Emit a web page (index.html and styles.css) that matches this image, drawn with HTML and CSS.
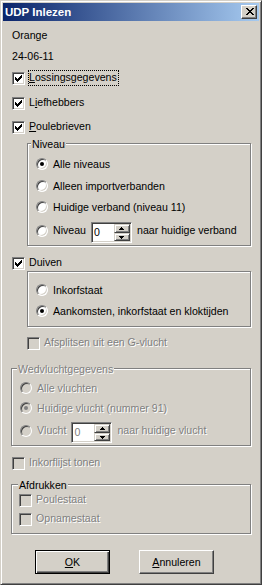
FILE: index.html
```html
<!DOCTYPE html>
<html lang="nl">
<head>
  <meta charset="UTF-8" />
  <title>UDP Inlezen</title>
  <link rel="stylesheet" href="styles.css">
</head>
<body>

  <div class="window">
    <div class="titlebar">
      <span class="caption">UDP Inlezen</span>
      <span class="close-btn">
        <svg width="8" height="7" viewBox="0 0 8 7" shape-rendering="crispEdges"><path d="M0 0h2v1H0zM6 0h2v1H6zM1 1h2v1H1zM5 1h2v1H5zM2 2h4v1H2zM3 3h2v1H3zM2 4h4v1H2zM1 5h2v1H1zM5 5h2v1H5zM0 6h2v1H0zM6 6h2v1H6z"/></svg>
      </span>
    </div>

    <div class="client">
      <div class="static name">Orange</div>
      <div class="static date">24-06-11</div>

      <!-- onderdelen -->
      <div class="row opt-lossing">
        <span class="check"><svg class="tick" width="7" height="7" viewBox="0 0 7 7" shape-rendering="crispEdges"><path d="M6 0h1v1H6zM5 1h2v1H5zM0 2h1v1H0zM4 2h3v1H4zM0 3h2v1H0zM3 3h3v1H3zM0 4h5v1H0zM1 5h3v1H1zM2 6h1v1H2z"/></svg></span>
        <label class="focus"><u>L</u>ossingsgegevens</label>
      </div>
      <div class="row opt-lief">
        <span class="check"><svg class="tick" width="7" height="7" viewBox="0 0 7 7" shape-rendering="crispEdges"><path d="M6 0h1v1H6zM5 1h2v1H5zM0 2h1v1H0zM4 2h3v1H4zM0 3h2v1H0zM3 3h3v1H3zM0 4h5v1H0zM1 5h3v1H1zM2 6h1v1H2z"/></svg></span>
        <label>L<u>i</u>efhebbers</label>
      </div>
      <div class="row opt-poule">
        <span class="check"><svg class="tick" width="7" height="7" viewBox="0 0 7 7" shape-rendering="crispEdges"><path d="M6 0h1v1H6zM5 1h2v1H5zM0 2h1v1H0zM4 2h3v1H4zM0 3h2v1H0zM3 3h3v1H3zM0 4h5v1H0zM1 5h3v1H1zM2 6h1v1H2z"/></svg></span>
        <label><u>P</u>oulebrieven</label>
      </div>

      <!-- niveau -->
      <div class="group niveau">
        <div class="group-title">Niveau</div>
        <div class="radio-row r-first"><span class="radio on"></span><label>Alle niveaus</label></div>
        <div class="radio-row r-second"><span class="radio"></span><label>Alleen importverbanden</label></div>
        <div class="radio-row r-third"><span class="radio"></span><label>Huidige verband (niveau 11)</label></div>
        <div class="spin-row r-spin">
          <span class="radio"></span><label>Niveau</label>
          <div class="spin">
            <span class="spin-value">0</span>
            <span class="spin-arrows">
              <span class="spin-btn up"><svg width="5" height="3" viewBox="0 0 5 3" shape-rendering="crispEdges"><path d="M2 0h1v1h1v1h1v1H0V2h1V1h1z"/></svg></span>
              <span class="spin-btn down"><svg width="5" height="3" viewBox="0 0 5 3" shape-rendering="crispEdges"><path d="M0 0h5v1H4v1H3v1H2V2H1V1H0z"/></svg></span>
            </span>
          </div>
          <label class="after">naar huidige verband</label>
        </div>
      </div>

      <!-- duiven -->
      <div class="row opt-duiven">
        <span class="check"><svg class="tick" width="7" height="7" viewBox="0 0 7 7" shape-rendering="crispEdges"><path d="M6 0h1v1H6zM5 1h2v1H5zM0 2h1v1H0zM4 2h3v1H4zM0 3h2v1H0zM3 3h3v1H3zM0 4h5v1H0zM1 5h3v1H1zM2 6h1v1H2z"/></svg></span>
        <label>Duiven</label>
      </div>
      <div class="group duiven">
        <div class="radio-row d-first"><span class="radio"></span><label>Inkorfstaat</label></div>
        <div class="radio-row d-second"><span class="radio on"></span><label>Aankomsten, inkorfstaat en kloktijden</label></div>
      </div>

      <div class="row disabled opt-split">
        <span class="check"></span>
        <label>Afsplitsen uit een G-vlucht</label>
      </div>

      <!-- wedvlucht -->
      <div class="group disabled wedvlucht">
        <div class="group-title">Wedvluchtgegevens</div>
        <div class="radio-row w-first"><span class="radio"></span><label>Alle vluchten</label></div>
        <div class="radio-row w-second"><span class="radio on"></span><label>Huidige vlucht (nummer 91)</label></div>
        <div class="spin-row w-spin">
          <span class="radio"></span><label>Vlucht</label>
          <div class="spin">
            <span class="spin-value">0</span>
            <span class="spin-arrows">
              <span class="spin-btn up"><svg width="5" height="3" viewBox="0 0 5 3" shape-rendering="crispEdges"><path d="M2 0h1v1h1v1h1v1H0V2h1V1h1z"/></svg></span>
              <span class="spin-btn down"><svg width="5" height="3" viewBox="0 0 5 3" shape-rendering="crispEdges"><path d="M0 0h5v1H4v1H3v1H2V2H1V1H0z"/></svg></span>
            </span>
          </div>
          <label class="after">naar huidige vlucht</label>
        </div>
      </div>

      <div class="row disabled opt-korf">
        <span class="check"></span>
        <label>Inkorflijst tonen</label>
      </div>

      <!-- afdrukken -->
      <div class="group afdrukken">
        <div class="group-title">Afdrukken</div>
        <div class="row disabled a-first"><span class="check"></span><label>Poulestaat</label></div>
        <div class="row disabled a-second"><span class="check"></span><label>Opnamestaat</label></div>
      </div>

      <div class="buttons">
        <span class="btn default"><u>O</u>K</span>
        <span class="btn"><u>A</u>nnuleren</span>
      </div>
    </div>
  </div>

</body>
</html>
```

FILE: styles.css
```css
* {
  margin: 0;
  padding: 0;
  box-sizing: border-box;
}

body {
  background: #d4d0c8;
  font-family: "Liberation Sans", Arial, sans-serif;
  font-size: 10.6px;
  line-height: 13px;
  color: #000;
}

u {
  text-decoration: underline;
  text-decoration-thickness: 1px;
  text-underline-offset: 1px;
}

/* window frame */
.window {
  width: 262px;
  height: 585px;
  padding: 2px;
  background: #d4d0c8;
  border: 1px solid;
  border-color: #d4d0c8 #404040 #404040 #d4d0c8;
  box-shadow: inset 1px 1px #fff, inset -1px -1px #808080;
}

.titlebar {
  display: flex;
  align-items: center;
  justify-content: space-between;
  height: 18px;
  padding-left: 2px;
  background: linear-gradient(to right, #0a246a, #a6caf0);
}

.caption {
  color: #fff;
  font-weight: bold;
  font-size: 11.5px;
  line-height: 18px;
}

.close-btn {
  width: 16px;
  height: 14px;
  margin-right: 2px;
  padding: 2px 0 0 4px;
  background: #d4d0c8;
  border: 1px solid;
  border-color: #fff #404040 #404040 #fff;
  box-shadow: inset -1px -1px #808080;
}

svg {
  display: block;
}

.client {
  display: flex;
  flex-direction: column;
  align-items: flex-start;
  padding-left: 8px;
}

.static {
  padding-left: 1px;
}

.name { margin-top: 8px; }
.date { margin-top: 8px; }

/* checkbox rows */
.row {
  display: flex;
  align-items: flex-start;
  height: 13px;
  padding-left: 1px;
}

.row label {
  margin: -1px 0 0 4px;
  white-space: nowrap;
}

.row label.focus {
  margin: -2px 0 0 3px;
  padding: 0 1px 1px 0;
  border: 1px dotted #000;
}

.check {
  flex: none;
  width: 13px;
  height: 13px;
  padding: 2px;
  background: #fff;
  border: 1px solid;
  border-color: #808080 #fff #fff #808080;
  box-shadow: inset 1px 1px #404040, inset -1px -1px #d4d0c8;
}

.opt-lossing { margin-top: 9px; }
.opt-lief { margin-top: 12px; }
.opt-poule { margin-top: 11px; }
.opt-duiven { margin-top: 11px; }
.opt-split { margin-top: 10px; padding-left: 16px; }
.opt-korf { margin-top: 11px; }

/* group boxes */
.group {
  display: flex;
  flex-direction: column;
  align-items: flex-start;
  padding-left: 8px;
  border: 1px solid #808080;
  box-shadow: inset 1px 1px #fff, 1px 1px #fff;
}

.group-title {
  margin: -6px 0 0 -3px;
  padding: 0 1px;
  background: #d4d0c8;
  line-height: 13px;
}

.niveau { margin: 9px 0 0 16px; width: 224px; padding-bottom: 2px; }
.niveau .group-title { margin-left: -5px; }
.duiven { margin: 1px 0 0 16px; width: 224px; padding-bottom: 9px; }
.wedvlucht { margin-top: 18px; width: 240px; padding-bottom: 2px; }
.afdrukken { margin-top: 14px; width: 240px; padding-left: 7px; padding-bottom: 7px; }
.afdrukken .group-title { margin-left: -1px; }
.afdrukken .row { padding-left: 0; }

/* radio rows */
.radio-row {
  display: flex;
  align-items: flex-start;
  height: 12px;
  line-height: 12px;
}

.radio-row label,
.spin-row label {
  margin-left: 5px;
  white-space: nowrap;
}

.radio {
  flex: none;
  display: flex;
  align-items: center;
  justify-content: center;
  width: 12px;
  height: 12px;
  border-radius: 50%;
  background: #fff;
  border: 1px solid;
  border-color: #808080 #fff #fff #808080;
  box-shadow: inset 1px 1px #404040, inset -1px -1px #d4d0c8;
}

.radio.on::after {
  content: "";
  width: 4px;
  height: 4px;
  border-radius: 50%;
  background: #000;
}

.r-first { margin-top: 7px; }
.r-second { margin-top: 10px; }
.r-third { margin-top: 9px; }
.r-spin { margin-top: 9px; }
.d-first { margin-top: 12px; }
.d-second { margin-top: 9px; }
.w-first { margin-top: 6px; }
.w-second { margin-top: 8px; }
.w-spin { margin-top: 8px; }
.a-first { margin-top: 2px; }
.a-second { margin-top: 6px; }

/* spin edit */
.spin-row {
  display: flex;
  align-items: flex-start;
  height: 21px;
  line-height: 12px;
}

.spin-row .radio { margin-top: 3px; }
.spin-row label { margin-top: 2px; }
.spin-row label.after { margin-left: 5px; }

.spin {
  flex: none;
  display: flex;
  width: 41px;
  height: 21px;
  margin-left: 5px;
  padding: 1px;
  background: #fff;
  border: 1px solid;
  border-color: #808080 #fff #fff #808080;
  box-shadow: inset 1px 1px #404040, inset -1px -1px #d4d0c8;
}

.spin-value {
  flex: 1;
  padding-left: 1px;
  line-height: 17px;
  color: #000;
  text-shadow: none;
}

.spin-arrows {
  display: flex;
  flex-direction: column;
  width: 16px;
}

.spin-btn {
  display: flex;
  align-items: center;
  justify-content: center;
  background: #d4d0c8;
  border: 1px solid;
  border-color: #d4d0c8 #404040 #404040 #d4d0c8;
  box-shadow: inset 1px 1px #fff, inset -1px -1px #808080;
}

.spin-btn.up { height: 9px; }
.spin-btn.down { height: 8px; }

/* disabled controls */
.disabled label,
.disabled .group-title {
  color: #808080;
  text-shadow: 1px 1px 0 #fff;
}

.disabled .check,
.disabled .radio {
  background: #d4d0c8;
}

.disabled .radio.on::after {
  background: #808080;
}

.disabled .spin-value {
  color: #808080;
}

/* buttons */
.buttons {
  display: flex;
  gap: 29px;
  margin-top: 16px;
  padding-left: 24px;
}

.btn {
  display: flex;
  align-items: center;
  justify-content: center;
  width: 75px;
  height: 24px;
  background: #d4d0c8;
  border: 1px solid;
  border-color: #fff #404040 #404040 #fff;
  box-shadow: inset -1px -1px #808080;
}

.btn.default {
  border-color: #000;
  box-shadow: inset 1px 1px #fff, inset -1px -1px #404040, inset -2px -2px #808080;
}
```
